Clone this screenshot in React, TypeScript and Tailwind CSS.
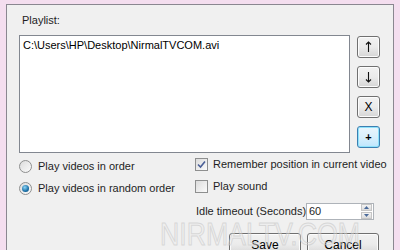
import React from "react";

const font = { fontFamily: '"Liberation Sans", Arial, sans-serif' };

function Btn({ children, focused = false, className = "" }: { children: React.ReactNode; focused?: boolean; className?: string }) {
  return (
    <div
      className={
        "flex items-center justify-center rounded-[3px] border text-[11px] text-black " +
        (focused
          ? "border-[#3c7fb1] shadow-[inset_0_0_0_1px_#8ee2fb] bg-gradient-to-b from-[#eaf6fd] via-[#d9f0fc] to-[#bee6fd] "
          : "border-[#707070] shadow-[inset_0_0_0_1px_#fcfcfc] bg-gradient-to-b from-[#f2f2f2] via-[#ebebeb] to-[#d5d5d5] ") +
        className
      }
    >
      {children}
    </div>
  );
}

function Radio({ checked }: { checked?: boolean }) {
  return (
    <div className="shrink-0 w-[13px] h-[13px] rounded-full border border-[#8e8f8f] bg-gradient-to-br from-[#dcdcdc] to-[#fbfbfb] flex items-center justify-center">
      {checked && (
        <div className="w-[7px] h-[7px] rounded-full bg-[radial-gradient(circle_at_40%_35%,#8fd6f7,#1a6fa6_60%,#0b4a78)]" />
      )}
    </div>
  );
}

function Check({ checked }: { checked?: boolean }) {
  return (
    <div className="shrink-0 w-[13px] h-[13px] border border-[#8e8f8f] bg-gradient-to-br from-[#dcdcdc] to-[#fbfbfb] flex items-center justify-center">
      {checked && (
        <svg width="9" height="9" viewBox="0 0 9 9">
          <path d="M1 4.5 L3.5 7 L8 1.5" stroke="#4a5f97" strokeWidth="1.6" fill="none" />
        </svg>
      )}
    </div>
  );
}

export default function App() {
  return (
    <div className="w-[400px] h-[250px] overflow-hidden relative bg-[#f4deef]" style={font}>
      <div className="ml-[6px] mt-[4px] w-[388px] h-[246px] border-l border-t border-r border-[#8a8790] bg-[#f0f0f0] relative">
        <div className="pl-[15px] pt-[8px] h-[30px] text-[11px] leading-[14px] text-[#1e1e1e]">Playlist:</div>
        <div className="flex">
          <div className="ml-[12px] w-[331px] h-[118px] border border-[#828790] bg-white px-[3px] pt-[2px] text-[11px] leading-[14px] text-black whitespace-nowrap">
            C:\Users\HP\Desktop\NirmalTVCOM.avi
          </div>
          <div className="ml-[7px] mt-[1px] flex flex-col gap-[8px]">
            <Btn className="w-[23px] h-[22px]">
              <svg width="9" height="12" viewBox="0 0 9 12"><path d="M4.5 1 V11 M2 3.5 L4.5 1 L7 3.5" stroke="#111" strokeWidth="1.1" fill="none" /></svg>
            </Btn>
            <Btn className="w-[23px] h-[22px]">
              <svg width="9" height="12" viewBox="0 0 9 12"><path d="M4.5 1 V11 M2 8.5 L4.5 11 L7 8.5" stroke="#111" strokeWidth="1.1" fill="none" /></svg>
            </Btn>
            <Btn className="w-[23px] h-[22px] text-[12px]">X</Btn>
            <Btn focused className="w-[23px] h-[22px] text-[10px] font-bold">+</Btn>
          </div>
        </div>
        <div className="flex">
          <div className="ml-[12px] w-[176px] shrink-0 pt-[2px] flex flex-col">
            <div className="h-[22px] flex items-center gap-[6px] text-[11px] text-[#1e1e1e] whitespace-nowrap">
              <Radio /> <span>Play videos in order</span>
            </div>
            <div className="h-[22px] flex items-center gap-[6px] text-[11px] text-[#1e1e1e] whitespace-nowrap">
              <Radio checked /> <span>Play videos in random order</span>
            </div>
          </div>
          <div className="flex flex-col">
            <div className="h-[22px] flex items-center gap-[5px] text-[11px] text-[#1e1e1e] whitespace-nowrap">
              <Check checked /> <span>Remember position in current video</span>
            </div>
            <div className="h-[22px] flex items-center gap-[5px] text-[11px] text-[#1e1e1e] whitespace-nowrap">
              <Check /> <span>Play sound</span>
            </div>
            <div className="h-[28px] flex items-center text-[11px] text-[#1e1e1e] whitespace-nowrap">
              <span className="ml-[1px] w-[110px] shrink-0">Idle timeout (Seconds)</span>
              <div className="w-[68px] h-[17px] shrink-0 border border-[#aeb3b9] bg-white flex items-center">
                <span className="ml-[2px] flex-1 leading-[14px]">60</span>
                <div className="w-[11px] h-[15px] mr-[1px] flex flex-col gap-[1px]">
                  <div className="h-[7px] bg-gradient-to-b from-[#f3f3f3] to-[#dcdcdc] border border-[#c5c5c5] flex items-center justify-center">
                    <svg width="5" height="3" viewBox="0 0 5 3"><path d="M0 3 L2.5 0 L5 3Z" fill="#4a6a9a" /></svg>
                  </div>
                  <div className="h-[7px] bg-gradient-to-b from-[#f3f3f3] to-[#dcdcdc] border border-[#c5c5c5] flex items-center justify-center">
                    <svg width="5" height="3" viewBox="0 0 5 3"><path d="M0 0 L2.5 3 L5 0Z" fill="#4a6a9a" /></svg>
                  </div>
                </div>
              </div>
            </div>
            <div className="mt-[8px] ml-[34px] flex gap-[6px]">
              <Btn className="w-[72px] h-[23px] text-[12px]">Save</Btn>
              <Btn className="w-[72px] h-[23px] text-[12px]">Cancel</Btn>
            </div>
          </div>
        </div>
        <div
          className="absolute left-[153px] top-[214px] origin-left scale-x-[0.86] text-[31px] leading-[31px] text-[rgba(235,235,235,0.35)] pointer-events-none whitespace-nowrap"
          style={{ WebkitTextStroke: "1px rgba(195,195,195,0.55)", fontFamily: '"Liberation Sans Narrow", "Liberation Sans", Arial, sans-serif' }}
        >
          NIRMALTV.COM
        </div>
      </div>
    </div>
  );
}
